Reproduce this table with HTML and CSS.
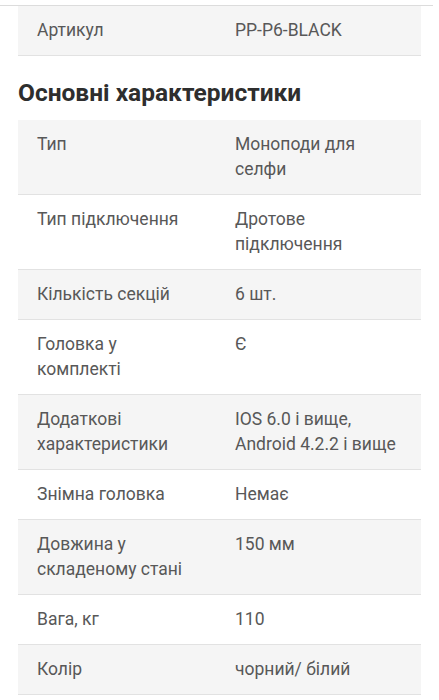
FILE: index.html
```html
<!DOCTYPE html>
<html lang="uk">
<head>
  <meta charset="UTF-8">
  <title>Характеристики</title>
  <link rel="stylesheet" href="styles.css">
</head>
<body>
  <div class="top-line"></div>

  <!-- Article -->
  <table class="specs">
    <tr>
      <td class="label">Артикул</td>
      <td class="value">PP-P6-BLACK</td>
    </tr>
  </table>

  <h2 class="title">Основні характеристики</h2>

  <!-- Main specs -->
  <table class="specs">
    <tr>
      <td class="label">Тип</td>
      <td class="value">Моноподи для селфи</td>
    </tr>
    <tr>
      <td class="label">Тип підключення</td>
      <td class="value">Дротове підключення</td>
    </tr>
    <tr>
      <td class="label">Кількість секцій</td>
      <td class="value">6 шт.</td>
    </tr>
    <tr>
      <td class="label">Головка у комплекті</td>
      <td class="value">Є</td>
    </tr>
    <tr>
      <td class="label">Додаткові характеристики</td>
      <td class="value">IOS 6.0 і вище, Android 4.2.2 і вище</td>
    </tr>
    <tr>
      <td class="label">Знімна головка</td>
      <td class="value">Немає</td>
    </tr>
    <tr>
      <td class="label">Довжина у складеному стані</td>
      <td class="value">150 мм</td>
    </tr>
    <tr>
      <td class="label">Вага, кг</td>
      <td class="value">110</td>
    </tr>
    <tr>
      <td class="label">Колір</td>
      <td class="value">чорний/ білий</td>
    </tr>
  </table>
</body>
</html>
```

FILE: styles.css
```css
* {
  box-sizing: border-box;
}

html, body {
  margin: 0;
  padding: 0;
  background: #ffffff;
  font-family: Roboto, "Noto Sans", sans-serif;
}

.top-line {
  height: 1px;
  margin: 5px 6px 0 0;
  background: #dcdcdc;
}

/* Spec tables */
.specs {
  width: 403px;
  margin: 0 18px;
  border-collapse: collapse;
  font-size: 17.5px;
  line-height: 25px;
  color: #585858;
}

.specs tr {
  border-bottom: 1px solid #e2e2e2;
}

.specs tr:nth-child(odd) {
  background: #f5f5f5;
}

.specs td {
  vertical-align: top;
  padding: 12px 0;
}

.specs .label {
  width: 217px;
  padding-left: 19px;
  padding-right: 45px;
}

.specs .value {
  padding-right: 18px;
}

/* Section title */
.title {
  margin: 23px 18px 13px;
  font-size: 24.5px;
  line-height: 28px;
  font-weight: 700;
  color: #2e2e2e;
}
```
